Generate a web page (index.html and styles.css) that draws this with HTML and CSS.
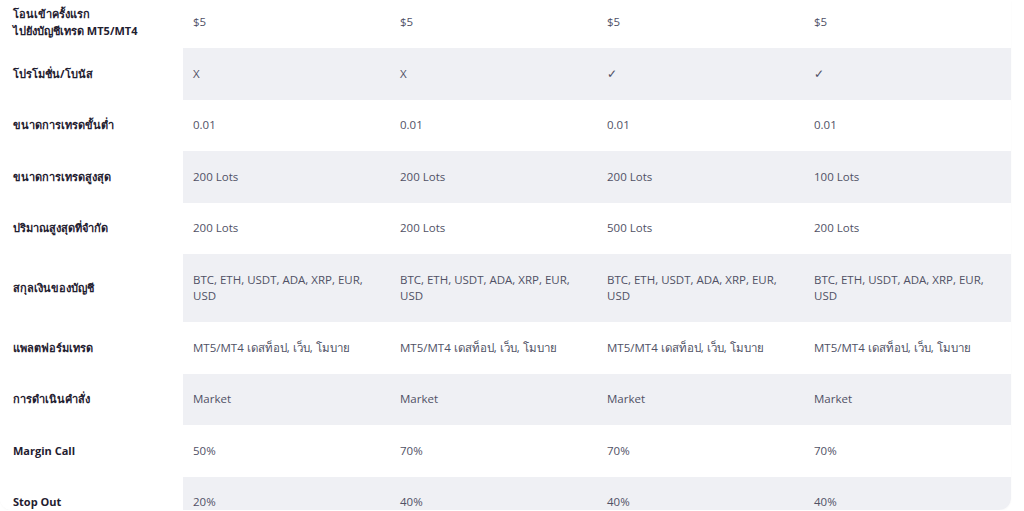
FILE: index.html
```html
<!DOCTYPE html>
<html lang="th">
<head>
<meta charset="utf-8">
<title>Account comparison</title>
<link rel="stylesheet" href="styles.css">
</head>
<body>
<div class="frame">
  <table class="compare">
    <colgroup>
      <col class="c-label"><col class="c-val"><col class="c-val"><col class="c-val"><col class="c-val">
    </colgroup>
    <tbody>
      <tr class="first">
        <th>โอนเข้าครั้งแรก<br>ไปยังบัญชีเทรด MT5/MT4</th>
        <td>$5</td><td>$5</td><td>$5</td><td>$5</td>
      </tr>
      <tr>
        <th>โปรโมชั่น/โบนัส</th>
        <td>X</td><td>X</td><td>✓</td><td>✓</td>
      </tr>
      <tr>
        <th>ขนาดการเทรดขั้นต่ำ</th>
        <td>0.01</td><td>0.01</td><td>0.01</td><td>0.01</td>
      </tr>
      <tr>
        <th>ขนาดการเทรดสูงสุด</th>
        <td>200 Lots</td><td>200 Lots</td><td>200 Lots</td><td>100 Lots</td>
      </tr>
      <tr>
        <th>ปริมาณสูงสุดที่จำกัด</th>
        <td>200 Lots</td><td>200 Lots</td><td>500 Lots</td><td>200 Lots</td>
      </tr>
      <tr>
        <th>สกุลเงินของบัญชี</th>
        <td>BTC, ETH, USDT, ADA, XRP, EUR, USD</td>
        <td>BTC, ETH, USDT, ADA, XRP, EUR, USD</td>
        <td>BTC, ETH, USDT, ADA, XRP, EUR, USD</td>
        <td>BTC, ETH, USDT, ADA, XRP, EUR, USD</td>
      </tr>
      <tr>
        <th>แพลตฟอร์มเทรด</th>
        <td>MT5/MT4 เดสท็อป, เว็บ, โมบาย</td>
        <td>MT5/MT4 เดสท็อป, เว็บ, โมบาย</td>
        <td>MT5/MT4 เดสท็อป, เว็บ, โมบาย</td>
        <td>MT5/MT4 เดสท็อป, เว็บ, โมบาย</td>
      </tr>
      <tr>
        <th>การดำเนินคำสั่ง</th>
        <td>Market</td><td>Market</td><td>Market</td><td>Market</td>
      </tr>
      <tr>
        <th>Margin Call</th>
        <td>50%</td><td>70%</td><td>70%</td><td>70%</td>
      </tr>
      <tr>
        <th>Stop Out</th>
        <td>20%</td><td>40%</td><td>40%</td><td>40%</td>
      </tr>
    </tbody>
  </table>
</div>
</body>
</html>
```
FILE: styles.css
```css
html, body {
  margin: 0;
  padding: 0;
  background: #ffffff;
}

body {
  font-family: "Open Sans", "Noto Sans", sans-serif;
}

.frame {
  width: 1011px;
  height: 510px;
  overflow: hidden;
  border-radius: 0 0 12px 12px;
  box-shadow: 0 1px 2px rgba(0, 0, 0, 0.03);
}

.compare {
  border-collapse: collapse;
  table-layout: fixed;
  width: 1011px;
}

.c-label { width: 183px; }
.c-val { width: 207px; }

.compare th,
.compare td {
  padding: 17.5px 15px 17.5px 10px;
  line-height: 16.5px;
  vertical-align: middle;
  text-align: left;
}

.compare th {
  padding-left: 13px;
  font-size: 11px;
  font-weight: 700;
  color: #1f2030;
  background: #ffffff;
}

.compare td {
  font-size: 11.5px;
  font-weight: 400;
  color: #505165;
}

.compare tr:nth-child(even) td {
  background: #eff0f4;
}

.compare tr.first th,
.compare tr.first td {
  padding-top: 6px;
  padding-bottom: 9px;
}
```
